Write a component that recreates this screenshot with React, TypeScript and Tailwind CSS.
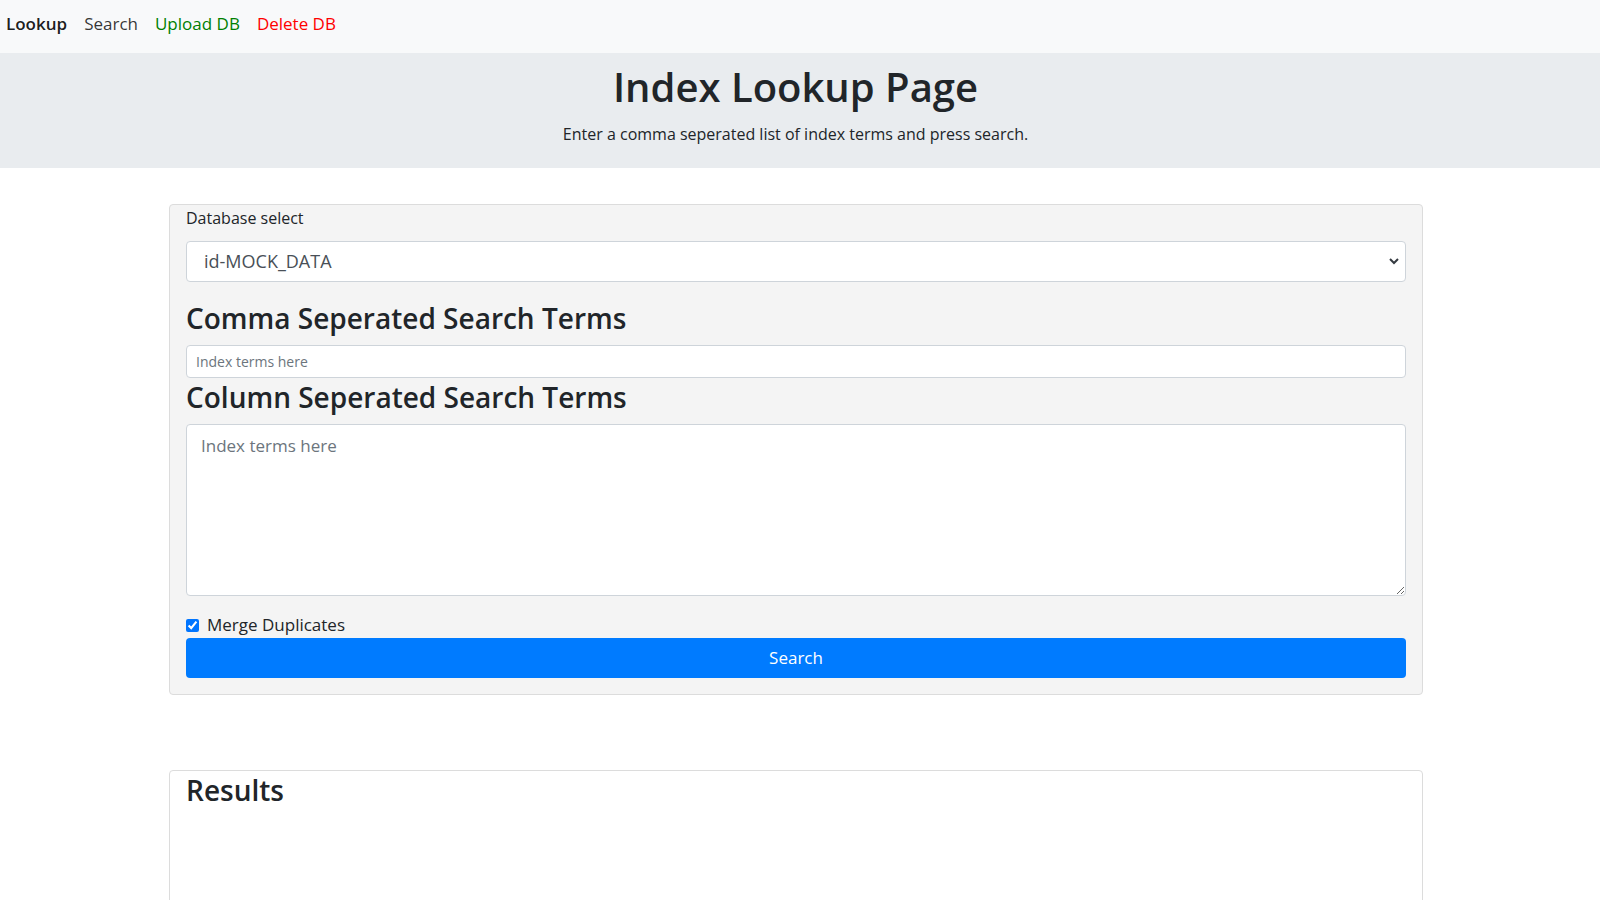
import { useState } from "react";

function Navbar() {
    return (
        <nav className="flex flex-row items-center h-[53px] bg-[#f8f9fa] px-[6px] pb-[6px] gap-[17px] text-[17px]">
            <a className="text-[#000000e6] font-semibold">Lookup</a>
            <a className="text-[#000000cc]">Search</a>
            <a className="text-[green]">Upload DB</a>
            <a className="text-[red]">Delete DB</a>
        </nav>
    );
}

function App() {
    const [merge, setMerge] = useState(true);

    return (
        <div className="flex flex-col w-full min-h-screen bg-white text-[#212529] font-['Open_Sans',sans-serif]">
            <Navbar />

            <div className="flex flex-col items-center bg-[#e9ecef] h-[115px] pt-[4px] pr-[9px]">
                <h1 className="text-[40px] font-semibold leading-[60px]">Index Lookup Page</h1>
                <p className="text-[16px] leading-[24px] mt-[5px]">Enter a comma seperated list of index terms and press search.</p>
            </div>

            <div className="flex flex-col pr-[8px]">
                <div className="flex flex-col w-[1254px] mx-auto mt-[36px] bg-[#f4f4f4] border border-[#dcdcdc] rounded-[4px] px-4 pt-[1px] pb-[16px]">
                    <label className="text-[16px] leading-[24px]">Database select</label>
                    <div className="relative mt-[11px]">
                        <select className="appearance-none w-full h-[41px] bg-white border border-[#ced4da] rounded-[4px] pl-[17px] text-[18px] text-[#495057] outline-none">
                            <option>id-MOCK_DATA</option>
                        </select>
                        <svg className="absolute right-[7px] top-[16px] w-[10px] h-[8px] pointer-events-none" viewBox="0 0 10 8">
                            <path d="M1 2 L5 6 L9 2" fill="none" stroke="#343a40" strokeWidth="2" />
                        </svg>
                    </div>

                    <h3 className="text-[28px] font-semibold leading-[34px] mt-[19px]">Comma Seperated Search Terms</h3>
                    <input
                        className="h-[33px] mt-[10px] bg-white border border-[#ced4da] rounded-[4px] px-[9px] text-[14px] outline-none placeholder:text-[#6c757d]"
                        placeholder="Index terms here"
                    />

                    <h3 className="text-[28px] font-semibold leading-[34px] mt-[2px]">Column Seperated Search Terms</h3>
                    <textarea
                        className="h-[172px] mt-[10px] bg-white border border-[#ced4da] rounded-[4px] px-[14px] py-[8px] text-[17px] outline-none placeholder:text-[#6c757d]"
                        placeholder="Index terms here"
                    />

                    <label className="flex flex-row items-center gap-[8px] mt-[18px] text-[17px] leading-[22px]">
                        <input
                            type="checkbox"
                            className="w-[13px] h-[13px] accent-[#0075ff]"
                            checked={merge}
                            onChange={() => setMerge(!merge)}
                        />
                        Merge Duplicates
                    </label>
                    <button className="h-[40px] mt-[2px] bg-[#007bff] text-white text-[17px] rounded-[4px]">Search</button>
                </div>

                <div className="flex flex-col w-[1254px] mx-auto mt-[75px] h-[160px] bg-white border border-[#dcdcdc] rounded-[4px] px-4">
                    <h3 className="text-[28px] font-semibold leading-[38px]">Results</h3>
                </div>
            </div>
        </div>
    );
}

export default App;
